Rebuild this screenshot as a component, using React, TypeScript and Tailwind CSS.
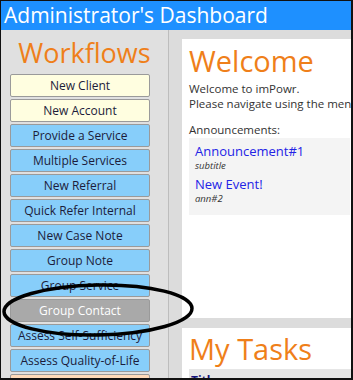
import React from "react";

const workflows: { label: string; tone: "new" | "svc" | "sel" | "peach" }[] = [
  { label: "New Client", tone: "new" },
  { label: "New Account", tone: "new" },
  { label: "Provide a Service", tone: "svc" },
  { label: "Multiple Services", tone: "svc" },
  { label: "New Referral", tone: "svc" },
  { label: "Quick Refer Internal", tone: "svc" },
  { label: "New Case Note", tone: "svc" },
  { label: "Group Note", tone: "svc" },
  { label: "Group Service", tone: "svc" },
  { label: "Group Contact", tone: "sel" },
  { label: "Assess Self-Sufficiency", tone: "svc" },
  { label: "Assess Quality-of-Life", tone: "svc" },
  { label: "", tone: "peach" },
];

const toneClass = {
  new: "bg-[#fffee0] text-[#1c1c3a]",
  svc: "bg-[#87cefa] text-[#1c1c3a]",
  sel: "bg-[#a9a9a9] text-white",
  peach: "bg-[#ffdab9] text-[#1c1c3a]",
};

function WorkflowButton({ label, tone }: { label: string; tone: keyof typeof toneClass }) {
  return (
    <button
      className={`w-[140px] h-[23px] shrink-0 rounded-[2px] border border-[#9a9a9a] text-[12px] leading-none ${toneClass[tone]}`}
    >
      {label}
    </button>
  );
}

export default function App() {
  return (
    <div
      className="relative w-[353px] h-[380px] overflow-hidden border-l border-t border-r-2 border-b-2 border-[#111] bg-[#dcdcdc] flex flex-col"
      style={{ fontFamily: '"Open Sans", "Noto Sans", sans-serif' }}
    >
      <header className="h-[29px] shrink-0 bg-[#1e90ff] text-white text-[21px] leading-[29px] pl-[3px] whitespace-nowrap">
        Administrator's Dashboard
      </header>

      <div className="flex flex-1 min-h-0">
        {/* workflows column */}
        <aside className="w-[168px] shrink-0 border-r border-[#bdbdbd] bg-[#e0e0e0] flex flex-col">
          <h2 className="self-center text-[27px] leading-none text-[#ef7f1a] mt-[9px] mb-[8px]">Workflows</h2>
          <div className="flex flex-col gap-[2px] pl-[9px]">
            {workflows.map((w, i) => (
              <WorkflowButton key={i} label={w.label} tone={w.tone} />
            ))}
          </div>
        </aside>

        {/* main content */}
        <main className="flex-1 min-w-0 pl-[13px] pt-[9px] flex flex-col gap-[10px]">
          <section className="h-[279px] shrink-0 bg-white pl-[7px] pt-[7px] overflow-hidden">
            <h1 className="text-[29px] leading-none text-[#ef7f1a]">Welcome</h1>
            <p className="mt-[6px] text-[11.5px] leading-[15px] text-[#333] whitespace-nowrap">
              Welcome to imPowr.
              <br />
              Please navigate using the menu on the left.
            </p>
            <p className="mt-[11px] text-[11.5px] leading-[15px] text-[#333]">Announcements:</p>
            <div className="mt-[1px] bg-[#f4f4f4] h-[77px] pl-[6px] pt-[5px] mr-[1px]">
              <div className="text-[13px] leading-[16px] text-[#2323e6]">Announcement#1</div>
              <div className="text-[9.5px] leading-[14px] italic text-[#333]">subtitle</div>
              <div className="mt-[3px] text-[13px] leading-[16px] text-[#2323e6]">New Event!</div>
              <div className="text-[9.5px] leading-[14px] italic text-[#333]">ann#2</div>
            </div>
          </section>

          <section className="flex-1 bg-white pl-[7px] pt-[6px] overflow-hidden">
            <h1 className="text-[29px] leading-none text-[#ef7f1a]">My Tasks</h1>
            <div className="mt-[6px] bg-[#e6e6e6] h-[20px] pl-[2px] pt-[4px] text-[12px] font-bold text-[#14147a] leading-[16px]">
              Title
            </div>
          </section>
        </main>
      </div>

      {/* hand-drawn highlight around the selected workflow */}
      <svg
        className="absolute left-0 top-0 pointer-events-none"
        width="353"
        height="380"
        viewBox="0 0 353 380"
      >
        <ellipse
          cx="97"
          cy="309"
          rx="94"
          ry="25"
          fill="none"
          stroke="#000"
          strokeWidth="3.5"
          transform="rotate(-1 97 309)"
        />
      </svg>
    </div>
  );
}
